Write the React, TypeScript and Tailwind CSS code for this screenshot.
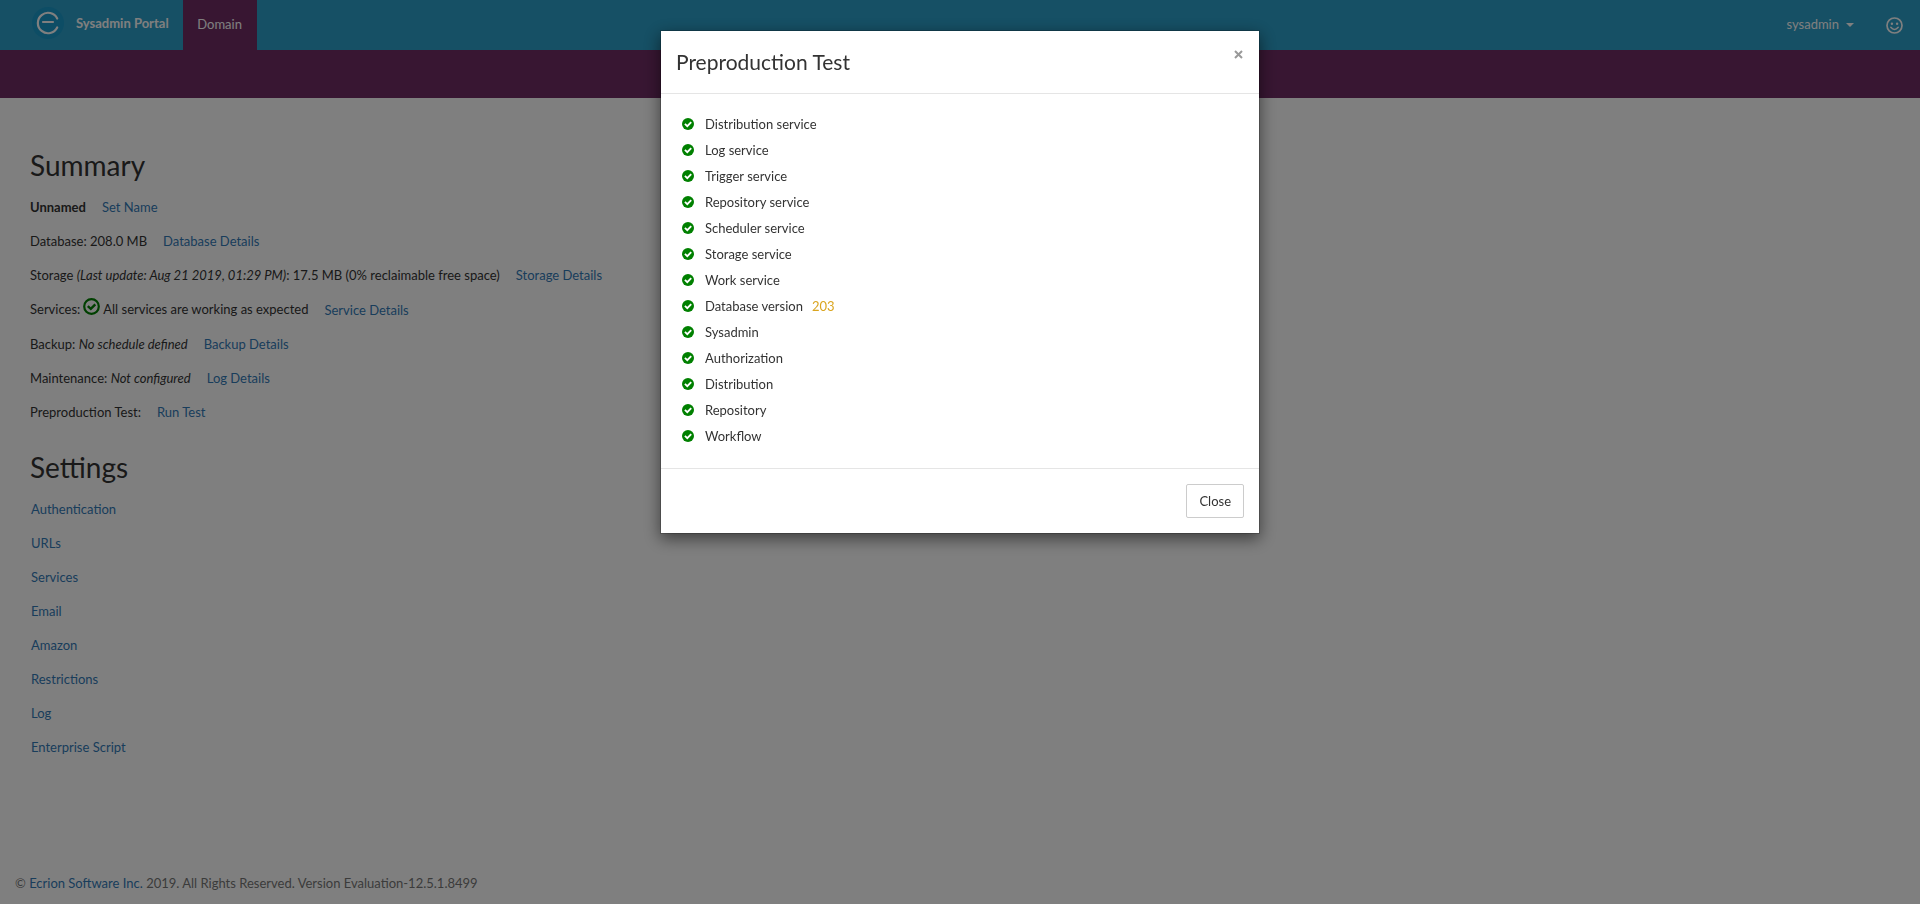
import { useState } from "react";
import type { ReactNode } from "react";

const services: { name: string; note?: string }[] = [
  { name: "Distribution service" },
  { name: "Log service" },
  { name: "Trigger service" },
  { name: "Repository service" },
  { name: "Scheduler service" },
  { name: "Storage service" },
  { name: "Work service" },
  { name: "Database version", note: "203" },
  { name: "Sysadmin" },
  { name: "Authorization" },
  { name: "Distribution" },
  { name: "Repository" },
  { name: "Workflow" },
];

const settings = [
  "Authentication",
  "URLs",
  "Services",
  "Email",
  "Amazon",
  "Restrictions",
  "Log",
  "Enterprise Script",
];

function Logo() {
  return (
    <svg className="size-8" viewBox="0 0 32 32" fill="none" aria-hidden="true">
      <circle cx="16" cy="16" r="16" fill="#1a9acb" />
      <path
        d="M25.2 11.5A10.2 10.2 0 1 0 25.2 20.5M11 15H21"
        stroke="#fff"
        strokeWidth="2.2"
        strokeLinecap="round"
      />
    </svg>
  );
}

function Smiley() {
  return (
    <svg className="size-[17px]" viewBox="0 0 17 17" fill="none" aria-hidden="true">
      <circle cx="8.5" cy="8.5" r="7.5" stroke="#fff" strokeWidth="1.7" />
      <circle cx="5.9" cy="6.8" r="1.2" fill="#fff" />
      <circle cx="11.1" cy="6.8" r="1.2" fill="#fff" />
      <path d="M4.8 10.2Q8.5 14.6 12.2 10.2" stroke="#fff" strokeWidth="1.5" strokeLinecap="round" />
    </svg>
  );
}

function CheckSolid() {
  return (
    <svg className="size-3" viewBox="0 0 12 12" fill="none" aria-hidden="true">
      <circle cx="6" cy="6" r="6" fill="#008000" />
      <path d="M2.9 5.9L5.3 8.1L9.2 4.2" stroke="#fff" strokeWidth="1.9" />
    </svg>
  );
}

function CheckOutline() {
  return (
    <svg className="size-[17px]" viewBox="0 0 17 17" fill="none" aria-hidden="true">
      <circle cx="8.5" cy="8.5" r="7.3" stroke="#008000" strokeWidth="2.2" />
      <path d="M4.8 8.2L7.8 10.9L12.3 6.4" stroke="#008000" strokeWidth="2.4" />
    </svg>
  );
}

function Row({ children, link }: { children: ReactNode; link: string }) {
  return (
    <div className="flex min-h-5 items-center gap-4">
      <div className="flex items-center gap-[3px]">{children}</div>
      <a href="#" className="pt-px text-[#337ab7]">
        {link}
      </a>
    </div>
  );
}

export default function App() {
  const [open, setOpen] = useState(true);
  return (
    <div className="flex min-h-screen flex-col bg-white font-['Lato','Liberation_Sans',sans-serif] text-[13px] leading-5 text-[#333]">
      <header className="flex h-[50px] bg-[#2ca0ca] text-white">
        <a href="#" className="flex items-center gap-3 pb-1 pl-8 pr-[14px] font-bold">
          <Logo />
          Sysadmin Portal
        </a>
        <a href="#" className="flex w-[74px] items-center justify-center bg-[#702d65] pb-0.5">
          Domain
        </a>
        <div className="ml-auto flex items-center pr-[17px]">
          <button type="button" className="flex items-center gap-[7px] pb-0.5">
            sysadmin
            <svg className="mt-0.5 h-1 w-2" viewBox="0 0 8 4" aria-hidden="true">
              <path d="M0 0H8L4 4Z" fill="#fff" />
            </svg>
          </button>
          <button type="button" aria-label="Feedback" className="ml-8">
            <Smiley />
          </button>
        </div>
      </header>
      <div className="h-12 bg-[#702d65]" />

      <main className="flex-1 px-[30px] pt-[51px]">
        <h1 className="text-[28px] leading-8">Summary</h1>
        <div className="mt-[15px] flex flex-col gap-[13px]">
          <Row link="Set Name">
            <b>Unnamed</b>
          </Row>
          <Row link="Database Details">Database: 208.0 MB</Row>
          <Row link="Storage Details">
            <span>
              Storage <i>(Last update: Aug 21 2019, 01:29 PM)</i>: 17.5 MB (0% reclaimable free space)
            </span>
          </Row>
          <Row link="Service Details">
            <span>Services:</span>
            <span className="pb-[5px]">
              <CheckOutline />
            </span>
            <span>All services are working as expected</span>
          </Row>
          <Row link="Backup Details">
            <span>
              Backup: <i>No schedule defined</i>
            </span>
          </Row>
          <Row link="Log Details">
            <span>
              Maintenance: <i>Not configured</i>
            </span>
          </Row>
          <Row link="Run Test">Preproduction Test:</Row>
        </div>

        <h1 className="mt-[29px] text-[28px] leading-8">Settings</h1>
        <ul className="mt-4 flex flex-col gap-[14px] pl-px">
          {settings.map((s) => (
            <li key={s}>
              <a href="#" className="text-[#337ab7]">
                {s}
              </a>
            </li>
          ))}
        </ul>
      </main>

      <footer className="px-[15px] pb-[11px] text-[#777]">
        © <a href="#" className="text-[#337ab7]">Ecrion Software Inc.</a> 2019. All Rights Reserved. Version
        Evaluation-12.5.1.8499
      </footer>

      {open && (
        <div className="fixed inset-0 flex items-start justify-center bg-black/50 pt-[30px]">
          <div
            role="dialog"
            aria-modal="true"
            aria-labelledby="dialog-title"
            className="w-[600px] border border-black/20 bg-white bg-clip-padding shadow-[0_5px_15px_rgba(0,0,0,0.5)]"
          >
            <div className="flex items-start justify-between border-b border-[#e5e5e5] p-[15px]">
              <h2 id="dialog-title" className="text-[21px] leading-8">
                Preproduction Test
              </h2>
              <button type="button" aria-label="Dismiss" onClick={() => setOpen(false)} className="py-1 pr-px">
                <svg className="size-[9px]" viewBox="0 0 9 9" aria-hidden="true">
                  <path d="M1 1L8 8M8 1L1 8" stroke="#999" strokeWidth="2" />
                </svg>
              </button>
            </div>
            <ul className="px-[21px] pb-[19px] pt-[17px]">
              {services.map((s) => (
                <li key={s.name} className="flex h-[26px] items-center">
                  <CheckSolid />
                  <span className="ml-[11px]">{s.name}</span>
                  {s.note && <span className="ml-[9px] text-[#daa520]">{s.note}</span>}
                </li>
              ))}
            </ul>
            <div className="flex justify-end border-t border-[#e5e5e5] p-[15px]">
              <button
                type="button"
                onClick={() => setOpen(false)}
                className="rounded-xs border border-[#ccc] px-3 py-[6px]"
              >
                Close
              </button>
            </div>
          </div>
        </div>
      )}
    </div>
  );
}
